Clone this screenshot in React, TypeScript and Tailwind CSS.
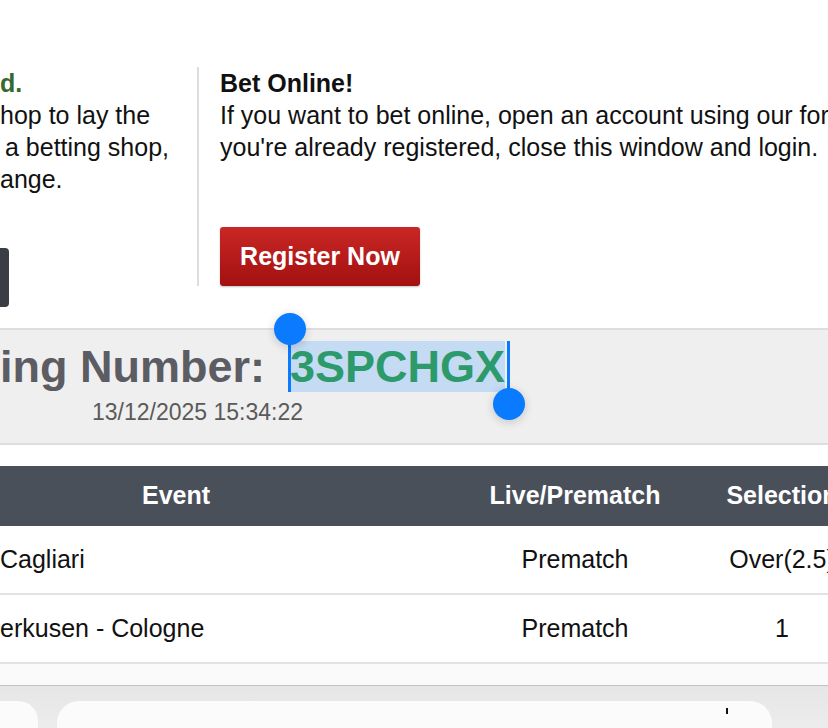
import React from 'react';

const rows = [
  { event: 'Cagliari', type: 'Prematch', selection: 'Over(2.5)' },
  { event: 'erkusen - Cologne', type: 'Prematch', selection: '1' },
];

const SelectionHandles: React.FC = () => (
  <>
    {/* start handle */}
    <div className="absolute left-[288px] top-[329px] w-[3px] h-[63px] bg-[#0a7aff]" />
    <div className="absolute left-[274px] top-[313px] w-[32px] h-[32px] rounded-full bg-[#0a7aff] shadow-[0_2px_10px_rgba(0,0,0,0.18)]" />
    {/* end handle */}
    <div className="absolute left-[507px] top-[341px] w-[3px] h-[63px] bg-[#0a7aff]" />
    <div className="absolute left-[493px] top-[388px] w-[32px] h-[32px] rounded-full bg-[#0a7aff] shadow-[0_2px_10px_rgba(0,0,0,0.18)]" />
  </>
);

export default function App() {
  return (
    <div className="relative w-[828px] h-[728px] overflow-hidden bg-white text-[#111] font-['Liberation_Sans',Arial,sans-serif]">
      {/* Info columns */}
      <div className="flex pt-[67px]">
        <div className="w-[197px] shrink-0 flex flex-col">
          <div className="text-[25px] leading-[32px] whitespace-nowrap">
            <div className="font-bold text-[#35692f]">d.</div>
            <div>hop to lay the</div>
            <div className="pl-[5px]">a betting shop,</div>
            <div>ange.</div>
          </div>
          <div className="mt-[53px] w-[9px] h-[59px] bg-[#3a3e44] rounded-r-[4px]" />
        </div>

        <div className="shrink-0 self-start border-l-2 border-[#dddddd] pl-[21px] pr-[40px] flex flex-col items-start">
          <div className="text-[25px] leading-[32px] whitespace-nowrap">
            <div className="font-bold">Bet Online!</div>
            <div>If you want to bet online, open an account using our form.</div>
            <div>you're already registered, close this window and login.</div>
          </div>
          <button className="mt-[64px] h-[59px] w-[200px] rounded-[3px] bg-gradient-to-b from-[#c92725] to-[#a30f10] text-white text-[25px] font-bold shadow-[0_1px_2px_rgba(0,0,0,0.25)]">
            Register Now
          </button>
        </div>
      </div>

      {/* Betting number band */}
      <div className="mt-[21px] border-y-2 border-[#dedede] bg-[#efefef] h-[117px] pt-[11px] whitespace-nowrap">
        <div className="text-[45px] leading-[52px] font-bold text-[#5c5c63]">
          ing Number:{'\u00a0'} <span className="bg-[#c5daf3] text-[#2c9a6b]">3SPCHGX</span>
        </div>
        <div className="mt-[5px] pl-[92px] text-[23px] leading-[28px] text-[#5a5a5a]">
          13/12/2025 15:34:22
        </div>
      </div>

      {/* Bets table */}
      <div className="mt-[21px] w-[884px]">
        <div className="grid grid-cols-[470px_210px_204px] h-[60px] items-center bg-[#4a505a] text-white text-[25px] font-bold">
          <div className="text-center pr-[118px]">Event</div>
          <div className="text-center">Live/Prematch</div>
          <div className="text-center">Selection</div>
        </div>
        {rows.map((r) => (
          <div
            key={r.event}
            className="grid grid-cols-[470px_210px_204px] h-[69px] items-center border-b-2 border-[#e2e2e2] text-[25px] whitespace-nowrap"
          >
            <div>{r.event}</div>
            <div className="text-center">{r.type}</div>
            <div className="text-center">{r.selection}</div>
          </div>
        ))}
      </div>
      <div className="h-[22px] bg-[#fafafa] border-b border-[#c2c2c2]" />

      {/* Browser toolbar */}
      <div className="h-[60px] bg-gradient-to-b from-[#e6e6e6] to-[#efefef] pt-[15px] flex gap-[19px]">
        <div className="w-[38px] h-full bg-[#fbfbfb] rounded-tr-[20px]" />
        <div className="relative w-[715px] h-full bg-[#fbfbfb] rounded-t-[22px]">
          <div className="absolute left-[669px] top-[7px] w-[2px] h-[6px] bg-[#111]" />
        </div>
      </div>

      <SelectionHandles />
    </div>
  );
}
